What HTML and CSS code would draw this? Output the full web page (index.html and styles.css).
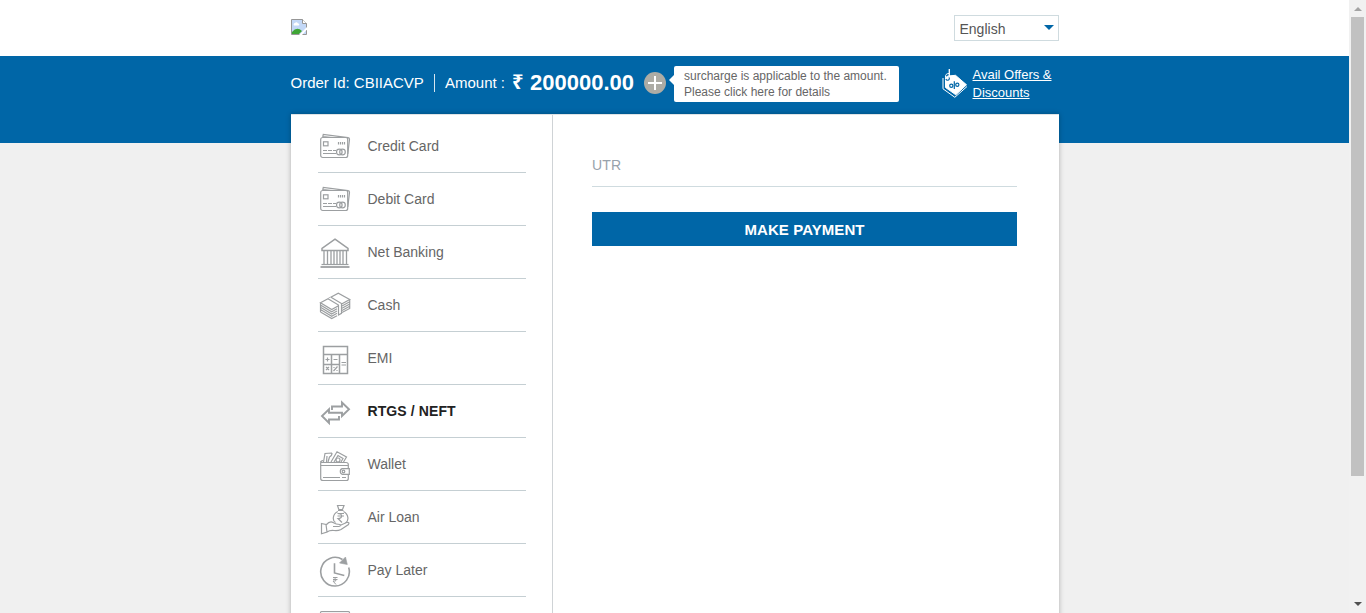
FILE: index.html
```html
<!DOCTYPE html>
<html lang="en">
<head>
<meta charset="utf-8">
<title>Payment</title>
<link rel="stylesheet" href="styles.css">
</head>
<body>
<div class="page">
  <header class="header">
    <div class="wrap header-row">
      <svg class="logo" width="16" height="16" viewBox="0 0 16 16">
        <path d="M.5 .5H11.5L15.5 4.5V15.5H.5Z" fill="#c3d8f7" stroke="#969696"/>
        <path d="M11.5 .5V4.5H15.5" fill="#fff" stroke="#969696"/>
        <path d="M3 6.500a1.500 1.500 0 0 1 1-2.500 1.700 1.700 0 0 1 3 .5 1 1 0 0 1 .5 2Z" fill="#fff"/>
        <path d="M1 15V13Q6 7 11 12L8 15Z" fill="#3fa535"/>
        <path d="M8 16L16 8V10.500L11 16Z" fill="#fff"/>
      </svg>
      <div class="language"><span>English</span><i class="caret"></i></div>
    </div>
  </header>
  <section class="band">
    <div class="wrap band-row">
      <span class="order">Order Id: CBIIACVP</span>
      <span class="amount-label">Amount :</span>
      <span class="rupee">₹</span>
      <strong class="amount">200000.00</strong>
      <svg class="plus" width="22" height="22" viewBox="0 0 22 22"><circle cx="11" cy="11" r="11" fill="#adaca5"/><path d="M11 4V18M4 11H18" stroke="#fff" stroke-width="2"/></svg>
      <div class="tip">surcharge is applicable to the amount.<br>Please click here for details</div>
      <a class="offers">
        <svg width="30" height="32" viewBox="0 0 30 32" fill="none" stroke="#fff">
          <path d="M5.500 10.500L8 9 15.500 8.300 26.500 17.800 15.800 27.800 5.500 20.500Z" fill="#fff" stroke-linejoin="round"/>
          <path d="M3 11V21.800L14.800 30.300 27 19.500" stroke-width="1"/>
          <path d="M9.300 9.500V12A1.800 1.800 0 0 1 5.900 12" stroke="#0066a7" stroke-width="1.100"/>
          <path d="M9.300 2V10.500" stroke-width="1.300"/><path d="M5.500 10.500Q5 6.500 9 6.500"/>
          <g stroke="#0066a7" stroke-width="1.200"><circle cx="11.300" cy="18.700" r="1.600"/><circle cx="17.300" cy="17.700" r="1.600"/><path d="M14.300 14.300V22"/></g>
        </svg>
        <span>Avail Offers &amp;<br>Discounts</span>
      </a>
    </div>
  </section>
  <main class="wrap card">
    <nav class="menu">
      <div class="item"><svg class="icon" viewBox="0 0 32 34"><path d="M3.700 7L4.300 4.300 29 7.700Q30.700 8 30.500 9.500L28.800 24M4 6.500L28 9"/><rect x="1.700" y="7.500" width="27" height="20" rx="2" class="solid"/><rect x="4.500" y="11.800" width="4.500" height="4"/><path d="M19.500 12V14.500M21.500 12V14.500M23.500 12V14.500M25.500 12V14.500M4 23.500H17"/><path d="M4 20.500H17" stroke-dasharray="4 1"/><circle cx="20.300" cy="22" r="2.800"/><circle cx="23.500" cy="22" r="2.800"/></svg>Credit Card</div>
      <div class="item"><svg class="icon" viewBox="0 0 32 34"><path d="M3.700 7L4.300 4.300 29 7.700Q30.700 8 30.500 9.500L28.800 24M4 6.500L28 9"/><rect x="1.700" y="7.500" width="27" height="20" rx="2" class="solid"/><rect x="4.500" y="11.800" width="4.500" height="4"/><path d="M19.500 12V14.500M21.500 12V14.500M23.500 12V14.500M25.500 12V14.500M4 23.500H17"/><path d="M4 20.500H17" stroke-dasharray="4 1"/><circle cx="20.300" cy="22" r="2.800"/><circle cx="23.500" cy="22" r="2.800"/></svg>Debit Card</div>
      <div class="item"><svg class="icon" viewBox="0 0 32 34"><path d="M16 3.200L29 12.500V14.500H3V12.500Z" stroke-width="1.500"/><path d="M5 15V28M8.500 15V28M12 15V28M15 15V28M18 15V28M21 15V28M24 15V28M27.500 15V28" stroke-width="1.300"/><path d="M2.500 28.500H29.500"/><path d="M1.500 31H30.500" stroke-width="1.800"/></svg>Net Banking</div>
      <div class="item"><svg class="icon" viewBox="0 0 32 34"><path d="M1.500 13.700L19.300 4.300 30.700 10.500 12.700 20.500Z"/><path d="M1.500 16L12.700 22.700 18 19.800M1.500 18.300L12.700 25 18 22M1.500 20.600L12.700 27.300 18 24.300M1.500 22.900L12.700 29.600 18 26.700M1.500 13.700V23M23 17L30.700 12.800M23 19.300L30.700 15M23 21.600L30.700 17.300M23 23.500L30.700 19.500V10.500"/><path d="M9 9.700L19.500 16V26L22.500 24.300V14.500L12 8.200" class="solid"/></svg>Cash</div>
      <div class="item"><svg class="icon" viewBox="0 0 32 34"><path d="M4.500 4.500H28.500V31.500H4.500ZM4.500 12.500H28.500M12.500 12.500V31.500M20.500 12.500V31.500M4.500 22.500H20.500" stroke-width="1.500"/><path d="M8.500 15.500V19.500M6.500 17.500H10.500M14.500 17.500H18.500M22.500 20.500H27M22.500 23H27M7 25L10 28M10 25L7 28M14.500 29L18.500 24.500M15 25V26M18 28V29"/></svg>EMI</div>
      <div class="item active"><svg class="icon" viewBox="0 0 32 34" style="--line:1.900"><path d="M13 15V11.500H23V7.500L30 14.300 23 21V17.700H10V14.300L3 21 10 28V24.500H20V21"/></svg>RTGS / NEFT</div>
      <div class="item"><svg class="icon" viewBox="0 0 32 34"><path d="M4.500 14L6 5.500 13 5M9 14L10.500 9Q13 8 13 5M7.500 14L8 8M12 14L18 3.700 27.500 9 24.500 14M15 14L19 7.500 24 10.500 22 14"/><circle cx="19" cy="12" r="2"/><path d="M4 12.500Q1.700 12.500 1.700 15V30.500Q1.700 32.500 4 32.500H27.500Q29.300 32.500 29.300 30.500V26.500M29.300 20.500V16.500Q29.300 14.500 27 14.500H4Q1.700 14.500 1.700 13M2 17.500H29"/><path d="M4 29.500H21M23 29.500H27"/><path d="M30.300 20.700H23.500Q21.300 21 21.300 23.500T23.500 26.300H30.300Z"/><circle cx="24.500" cy="23.500" r="1.300"/></svg>Wallet</div>
      <div class="item"><svg class="icon" viewBox="0 0 32 34"><path d="M18.500 4.500H25L23.500 8.500H19.800ZM19 9.500H24.500M18.800 10.500C13 13.500 13.500 20 16.500 21.500M24.500 10.500C30 13.500 30 20 26.500 22M18.500 12.500H25M18.500 15H25M18.500 12.500C24 12.500 24 17.500 19 17.500L23 21.500"/><path d="M2.500 22.500L7 23.500 8 31 2.500 32.700ZM7 24Q11 19.500 14 21.500T21 23.500Q22 25.500 19.500 25.500H14M21 24.500L27.500 21.500Q31 21 29.500 23.500L22 28.500Q19 30 15 29.500T8 31"/></svg>Air Loan</div>
      <div class="item"><svg class="icon" viewBox="0 0 32 34" style="--line:1.600"><path d="M23.500 5.500A14.300 14.300 0 1 0 29.700 13.500M15.500 9.300V19L25.300 21.500"/><path d="M20.500 9L26.500 3 28.300 10.500Z" fill="#9c9fa1" stroke="#9c9fa1" stroke-width=".6"/><path d="M14 23.500H18.500M14 25.500H18.500M14 23.500Q17.500 24 16.700 27H14L17 30.500" stroke-width="1"/></svg>Pay Later</div>
      <div class="item"><svg class="icon" viewBox="0 0 32 34"><rect x="1.500" y="4.500" width="29" height="24" rx="1" style="fill:#f1f3f4"/></svg></div>
    </nav>
    <section class="form">
      <div class="field">UTR</div>
      <div class="button">MAKE PAYMENT</div>
    </section>
  </main>
</div>
<aside class="scrollbar"><i class="up"></i><div class="thumb"></div><i class="down"></i></aside>
</body>
</html>
```
FILE: styles.css
```css
* { box-sizing: border-box; }
body { margin: 0; height: 613px; overflow: hidden; display: grid; grid-template-columns: 1349px 17px; font-family: "Liberation Sans", Arial, sans-serif; background: #f0f0f0; }
.page { height: 613px; overflow: hidden; }
.wrap { width: 768px; margin-left: 291px; }
.header { height: 56px; background: #fff; }
.header-row { display: flex; justify-content: space-between; align-items: flex-start; }
.logo { display: block; margin-top: 19px; }
.language { width: 105px; height: 26px; margin-top: 15px; padding: 2px 5px 0 4.5px; border: 1px solid #cfdbdf; display: flex; align-items: center; justify-content: space-between; font-size: 14px; color: #555; }
.caret { border: 5px solid transparent; border-top-color: #0066a7; border-bottom: 0; margin: 0 -1px 4px 0; }
.band { height: 87px; background: #0066a7; color: #fff; }
.band-row { height: 58px; display: flex; align-items: flex-start; white-space: nowrap; }
.order { margin-top: 18px; height: 18px; width: 144px; border-right: 1px solid #d5e5ef; font-size: 15px; line-height: 18px; text-indent: -.5px; }
.amount-label { margin: 18px 0 0 10px; width: 67px; font-size: 15px; line-height: 18px; }
.rupee { margin-top: 14px; width: 18px; font: bold 20px/24px "Noto Sans", sans-serif; }
.amount { margin-top: 14px; width: 114px; font-size: 22px; line-height: 26px; }
.plus { margin-top: 16px; flex: none; }
.tip { position: relative; margin: 10px 0 0 8px; width: 225px; height: 36px; padding: 2px 10px; border-radius: 2px; background: #fff; color: #666; font-size: 12px; line-height: 16px; }
.tip::before { content: ""; position: absolute; left: -5px; top: 9px; border: 5px solid transparent; border-right-color: #fff; border-left: 0; }
.offers { display: flex; margin: 12px 0 0 41px; font-size: 13px; line-height: 18px; text-decoration: underline; }
.offers svg { margin: -1px 2.5px 0 0; flex: none; }
.offers span { margin-top: -2px; }
.card { margin-top: -29px; height: 620px; display: flex; background: #fff; border-top: 1px solid #dfe3e5; box-shadow: 0 0 5px rgba(0, 0, 0, .28); position: relative; }
.menu { width: 262px; padding: 5px 26px 0 27px; border-right: 1px solid #cfd3d6; }
.item { height: 53px; border-bottom: 1px solid #c5cfd3; display: flex; align-items: center; font-size: 14px; color: #666; }
.active { font-weight: bold; color: #222; letter-spacing: .1px; }
.icon { width: 32px; height: 34px; margin: 2px 16.500px 0 0; transform: translateX(0); margin-left: 1px; flex: none; fill: none; stroke: #9c9fa1; stroke-width: var(--line, 1.200); }
.solid { fill: #fff; }
.form { flex: 1; padding: 30px 42px 0 39px; }
.field { height: 42px; border-bottom: 1px solid #cfdbdf; font-size: 14px; line-height: 40px; color: #98a2ab; letter-spacing: .2px; }
.button { margin-top: 25px; height: 34px; background: #0066a7; color: #fff; text-align: center; font-size: 15px; line-height: 35px; font-weight: bold; letter-spacing: .08px; }
.scrollbar { height: 613px; background: #f1f1f1; display: flex; flex-direction: column; align-items: center; }
.thumb { width: 13px; height: 459px; background: #c1c1c1; }
.up { margin: 7px 0 6px; border: 4px solid transparent; border-top: 0; border-bottom-color: #a3a3a3; }
.down { margin: auto 0 7px; border: 4px solid transparent; border-bottom: 0; border-top-color: #505050; }
```
